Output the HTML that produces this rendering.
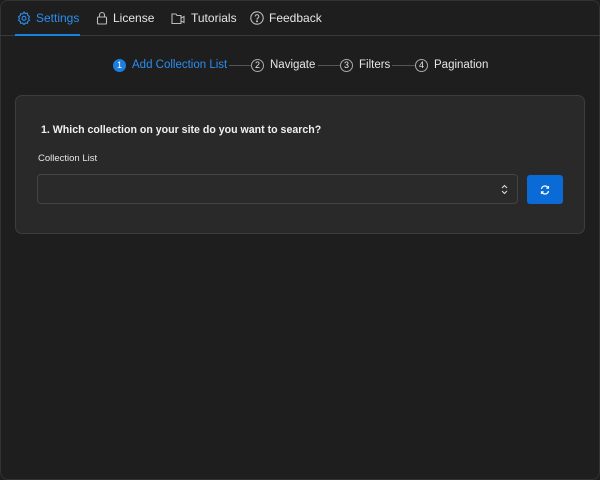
<!DOCTYPE html>
<html><head><style>
*{box-sizing:border-box;margin:0;padding:0}
body{width:600px;height:480px;background:#1e1e1e;font-family:"Liberation Sans",sans-serif;color:#e6e6e6;position:relative;overflow:hidden}
.frame{position:absolute;inset:0;border:1px solid #333;border-radius:8px}
.tab{position:absolute;top:10px;font-size:12px;display:flex;align-items:center;gap:5px;height:16px}
.line{position:absolute;left:0;right:0;top:35px;height:1px;background:#3a3a3a}
.ul{position:absolute;left:15px;width:65px;top:34px;height:2px;background:#1a7fe0}
.step{position:absolute;top:58px;font-size:11.5px;display:flex;align-items:center;gap:6px;height:14px}
.c{width:13px;height:13px;border-radius:50%;border:1px solid #aaa;font-size:9px;display:flex;align-items:center;justify-content:center}
.conn{position:absolute;top:65px;height:1px;background:#555}
.card{position:absolute;left:15px;top:95px;width:570px;height:139px;background:#292929;border:1px solid #3d3d3d;border-radius:7px}
.sel{position:absolute;left:37px;top:174px;width:481px;height:30px;border:1px solid #444;border-radius:4px;background:#2a2a2a}
.btn{position:absolute;left:527px;top:175px;width:36px;height:29px;background:#0a6ad6;border-radius:3px;display:flex;align-items:center;justify-content:center}
</style></head><body>
<div class="frame"></div>
<div class="tab" style="left:17px;color:#2b8ef0"><svg width="14" height="14" viewBox="0 0 14 14" fill="none" stroke="#2b8ef0" stroke-width="1.1"><path d="M7 1l1.3 1.6 2-.4.4 2L12.4 5.6 11.6 7.5l.8 1.9-1.7 1-.4 2-2-.4L7 13.6 5.7 12l-2 .4-.4-2L1.6 9.4 2.4 7.5 1.6 5.6l1.7-1 .4-2 2 .4z"/><circle cx="7" cy="7.3" r="2"/></svg>Settings</div>
<div class="tab" style="left:96px"><svg width="12" height="14" viewBox="0 0 12 14" fill="none" stroke="#bbb" stroke-width="1.1"><rect x="1.5" y="6" width="9" height="7" rx="1"/><path d="M3.5 6V4a2.5 2.5 0 015 0v2"/></svg>License</div>
<div class="tab" style="left:171px"><svg width="15" height="13" viewBox="0 0 15 13" fill="none" stroke="#bbb" stroke-width="1.1"><path d="M1 2h4l1 1.5h4v8H1z"/><path d="M10 6l3-1.5v6L10 9"/></svg>Tutorials</div>
<div class="tab" style="left:250px"><svg width="14" height="14" viewBox="0 0 14 14" fill="none" stroke="#bbb" stroke-width="1.1"><circle cx="7" cy="7" r="6.2"/><path d="M5.2 5.5a1.8 1.8 0 113 1.3c-.7.5-1.2.8-1.2 1.8"/><circle cx="7" cy="10.3" r=".5" fill="#bbb"/></svg>Feedback</div>
<div class="line"></div><div class="ul"></div>
<div class="step" style="left:113px;color:#2b8ef0"><div class="c" style="background:#1a7fe0;border-color:#1a7fe0;color:#fff">1</div>Add Collection List</div>
<div class="conn" style="left:229px;width:22px"></div>
<div class="step" style="left:251px"><div class="c">2</div>Navigate</div>
<div class="conn" style="left:318px;width:22px"></div>
<div class="step" style="left:340px"><div class="c">3</div>Filters</div>
<div class="conn" style="left:392px;width:23px"></div>
<div class="step" style="left:415px"><div class="c">4</div>Pagination</div>
<div class="card"></div>
<div style="position:absolute;left:41px;top:124px;font-size:10.6px;font-weight:bold;color:#f0f0f0">1. Which collection on your site do you want to search?</div>
<div style="position:absolute;left:38px;top:153px;font-size:9.5px;color:#e6e6e6">Collection List</div>
<div class="sel"><svg style="position:absolute;right:9px;top:9px" width="7" height="11" viewBox="0 0 7 11" fill="none" stroke="#ddd" stroke-width="1.1"><path d="M1 4l2.5-2.5L6 4M1 7l2.5 2.5L6 7"/></svg></div>
<div class="btn"><svg width="12" height="10" viewBox="0 0 12 10" fill="none" stroke="#fff" stroke-width="1.2"><path d="M2.5 4a3.5 3.5 0 016.5-1.2M9.5 6a3.5 3.5 0 01-6.5 1.2"/><path d="M9.5 1v2.2H7.3M2.5 9V6.8h2.2"/></svg></div>
</body></html>
